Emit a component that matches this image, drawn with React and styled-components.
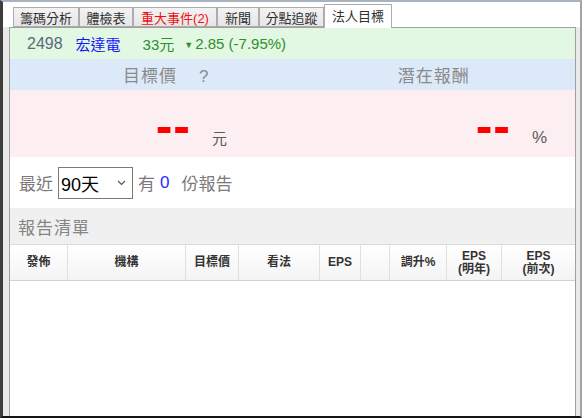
import React from 'react';
import styled, { createGlobalStyle } from 'styled-components';

const GlobalStyle = createGlobalStyle`
  body {
    margin: 0;
    background: #fff;
    font-family: "Liberation Sans", "Noto Sans CJK TC", sans-serif;
  }
`;

const Window = styled.div`
  width: 582px;
  height: 418px;
  box-sizing: border-box;
  border-left: 3px solid #3d3d3d;
  border-top: 2px solid #a9b3bd;
  border-bottom: 2px solid #141414;
  border-right: 2px solid #a3a3a3;
  display: flex;
  flex-direction: column;
  background: #fff;
`;

const TabStrip = styled.div`
  height: 25px;
  display: flex;
  align-items: flex-end;
  padding-left: 10px;
  position: relative;
  z-index: 2;
`;

const Tab = styled.div`
  box-sizing: border-box;
  width: ${p => p.$w}px;
  height: ${p => (p.$active ? '24px' : '20px')};
  margin: ${p => (p.$active ? '0 0 -1px 0' : '0')};
  display: flex;
  align-items: center;
  justify-content: center;
  font-size: 13px;
  color: ${p => (p.$alert ? '#f01010' : '#303030')};
  border: 1px solid #acacac;
  border-bottom: ${p => (p.$active ? 'none' : '1px solid #acacac')};
  padding-bottom: ${p => (p.$active ? '3px' : '0')};
  background: ${p => (p.$active ? '#fff' : 'linear-gradient(#f3f3f3, #e6e6e6)')};
  white-space: nowrap;
`;

const Body = styled.div`
  flex: 1;
  display: flex;
  min-height: 0;
`;

const Gutter = styled.div`
  width: ${p => p.$w}px;
  background: #e9e9e9;
`;

const Panel = styled.div`
  flex: 1;
  border: 1px solid #a0a0a0;
  border-bottom: none;
  display: flex;
  flex-direction: column;
  background: #fff;
`;

const StockBar = styled.div`
  height: 31px;
  background: #e2f8e2;
  display: flex;
  align-items: center;
  padding-left: 17px;
  font-size: 15px;
`;

const Field = styled.span`
  margin-left: ${p => p.$gap || 0}px;
  color: ${p => p.$color};
  font-size: ${p => p.$size || 15}px;
`;

const Arrow = styled.span`
  font-size: 9px;
  margin-right: 2px;
  position: relative;
  top: -1px;
`;

const TitleBand = styled.div`
  height: 31px;
  background: #dce9f8;
  display: grid;
  grid-template-columns: 1fr 1fr;
  align-items: center;
  font-size: 17px;
  color: #8a8a8a;
  letter-spacing: 1px;
`;

const TitleCell = styled.div`
  text-align: center;
  padding-left: ${p => p.$shift || 0}px;
`;

const Question = styled.span`
  margin-left: 22px;
`;

const ValueBand = styled.div`
  height: 67px;
  background: #fdeef2;
  display: grid;
  grid-template-columns: 180px 140px 180px 1fr;
  align-items: center;
`;

const BigValue = styled.div`
  text-align: right;
  font-size: 50px;
  font-weight: bold;
  color: #ff0000;
  letter-spacing: 1px;
  margin-right: -1px;
  line-height: 1;
  padding-top: 4px;
`;

const Unit = styled.div`
  padding-left: 22px;
  padding-top: 28px;
  font-size: ${p => p.$size || 15}px;
  color: #5a5a5a;
`;

const FilterRow = styled.div`
  height: 51px;
  display: flex;
  align-items: center;
  padding-left: 9px;
  font-size: 17px;
  color: #7a7a7a;
`;

const PeriodBox = styled.div`
  box-sizing: border-box;
  width: 75px;
  height: 32px;
  margin: 0 5px 0 5px;
  border: 1px solid #7a7a7a;
  display: flex;
  align-items: center;
  justify-content: space-between;
  padding: 0 6px 0 2px;
  font-size: 18px;
  color: #000;
  background: #fff;
`;

const Count = styled.span`
  color: #2a2aff;
  margin: 0 12px 0 5px;
`;

const ListTitle = styled.div`
  height: 36px;
  background: #f0f0f0;
  display: flex;
  align-items: center;
  padding-left: 8px;
  font-size: 17px;
  color: #858585;
  letter-spacing: 1px;
`;

const HeaderRow = styled.div`
  display: grid;
  grid-template-columns: 58px 118px 53px 81px 41px 29px 57px 55px 1fr;
  height: 37px;
  box-sizing: border-box;
  border-top: 1px solid #dcdcdc;
  border-bottom: 1px solid #d2d2d2;
  background: linear-gradient(#ffffff, #f4f4f4);
`;

const HeaderCell = styled.div`
  border-right: 1px solid #e0e0e0;
  display: flex;
  align-items: center;
  justify-content: center;
  text-align: center;
  font-size: 12px;
  font-weight: bold;
  line-height: 13px;
  color: #333;
  &:last-child {
    border-right: none;
  }
`;

const TableBody = styled.div`
  flex: 1;
  background: #fff;
`;

const Chevron = () => (
  <svg width="9" height="6" viewBox="0 0 9 6">
    <polyline points="1,1 4.5,4.5 8,1" fill="none" stroke="#555" strokeWidth="1.1" />
  </svg>
);

const tabs = [
  { label: '籌碼分析', w: 66 },
  { label: '體檢表', w: 54 },
  { label: '重大事件(2)', w: 84, alert: true },
  { label: '新聞', w: 42 },
  { label: '分點追蹤', w: 65 },
  { label: '法人目標', w: 68, active: true },
];

const columns = ['發佈', '機構', '目標價', '看法', 'EPS', '', '調升%', ['EPS', '(明年)'], ['EPS', '(前次)']];

const App = () => {
  return (
    <>
      <GlobalStyle />
      <Window>
        <TabStrip>
          {tabs.map(t => (
            <Tab key={t.label} $w={t.w} $active={t.active} $alert={t.alert}>{t.label}</Tab>
          ))}
        </TabStrip>
        <Body>
          <Gutter $w={6} />
          <Panel>
            <StockBar>
              <Field $color="#5a6a7b" $size={16}>2498</Field>
              <Field $color="#1414ff" $gap={13}>宏達電</Field>
              <Field $color="#2f8f2f" $gap={22}>33元</Field>
              <Field $color="#2f8f2f" $gap={10}><Arrow>▼</Arrow>2.85 (-7.95%)</Field>
            </StockBar>
            <TitleBand>
              <TitleCell $shift={30}>目標價<Question>?</Question></TitleCell>
              <TitleCell>潛在報酬</TitleCell>
            </TitleBand>
            <ValueBand>
              <BigValue>--</BigValue>
              <Unit>元</Unit>
              <BigValue>--</BigValue>
              <Unit $size={17}>%</Unit>
            </ValueBand>
            <FilterRow>
              最近
              <PeriodBox>90天<Chevron /></PeriodBox>
              有<Count>0</Count>份報告
            </FilterRow>
            <ListTitle>報告清單</ListTitle>
            <HeaderRow>
              {columns.map((c, i) => (
                <HeaderCell key={i}>
                  {Array.isArray(c) ? <span>{c[0]}<br />{c[1]}</span> : c}
                </HeaderCell>
              ))}
            </HeaderRow>
            <TableBody />
          </Panel>
          <Gutter $w={4} />
        </Body>
      </Window>
    </>
  );
};

export default App;
